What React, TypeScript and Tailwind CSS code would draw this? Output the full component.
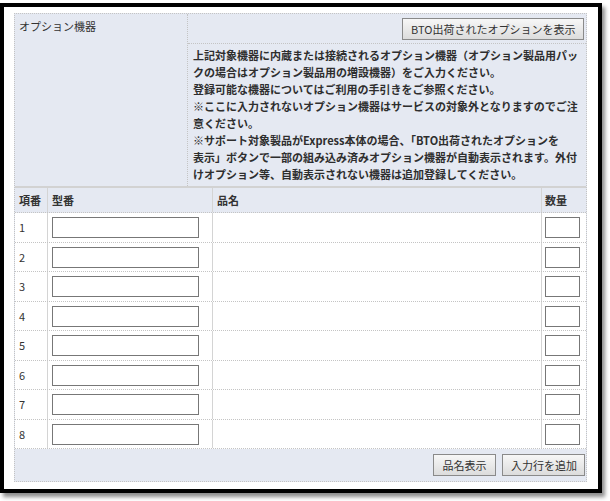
const rows = [1, 2, 3, 4, 5, 6, 7, 8];

const font = { fontFamily: '"Noto Sans CJK JP", "Noto Sans", sans-serif' };

function GrayButton({ children, className = "" }: { children: React.ReactNode; className?: string }) {
  return (
    <button
      className={`h-[22px] px-2 border border-[#8a8a8a] bg-gradient-to-b from-[#f7f7f7] to-[#dcdcdc] text-[11px] leading-none text-[#333] whitespace-nowrap ${className}`}
    >
      {children}
    </button>
  );
}

export default function App() {
  return (
    <div className="w-[610px] h-[501px] bg-white text-[#333]" style={font}>
      <div className="pt-[3px]">
        {/* Black frame */}
        <div className="w-[602px] h-[490px] border-4 border-black bg-white pl-[10px] pr-[11px] pt-[6px] pb-[7px] shadow-[3px_4px_4px_rgba(0,0,0,0.45)]">
          <div className="w-[573px] h-[469px] bg-[#e5e9f2] border border-dotted border-[#c4c4c4] flex flex-col">
            {/* Header */}
            <div className="flex h-[174px] border-b-2 border-[#d2d2d2]">
              <div className="w-[172px] px-[4px] pt-[4px] text-[11px] leading-[17px]">オプション機器</div>
              <div className="flex-1 border-l border-dotted border-[#c4c4c4] flex flex-col">
                <div className="h-[30px] flex items-center justify-end pr-[2px] pt-[1px] border-b border-dotted border-[#c4c4c4]">
                  <GrayButton className="w-[182px]">BTO出荷されたオプションを表示</GrayButton>
                </div>
                <div className="pl-[5px] pt-[3px] text-[11px] leading-[17px] font-bold text-[#2e2e2e] whitespace-nowrap">
                  上記対象機器に内蔵または接続されるオプション機器（オプション製品用パッ
                  <br />
                  クの場合はオプション製品用の増設機器）をご入力ください。
                  <br />
                  登録可能な機器についてはご利用の手引きをご参照ください。
                  <br />
                  ※ここに入力されないオプション機器はサービスの対象外となりますのでご注
                  <br />
                  意ください。
                  <br />
                  ※サポート対象製品がExpress本体の場合、「BTO出荷されたオプションを
                  <br />
                  表示」ボタンで一部の組み込み済みオプション機器が自動表示されます。外付
                  <br />
                  けオプション等、自動表示されない機器は追加登録してください。
                </div>
              </div>
            </div>

            {/* Column headings */}
            <div className="flex h-[25px] text-[11px] font-bold border-b border-dotted border-[#c4c4c4]">
              <div className="w-[33px] pl-[4px] flex items-center border-r border-[#d4d4d4]">項番</div>
              <div className="w-[165px] pl-[4px] flex items-center border-r border-[#d4d4d4]">型番</div>
              <div className="w-[329px] pl-[4px] flex items-center border-r border-[#d4d4d4]">品名</div>
              <div className="flex-1 pl-[3px] flex items-center">数量</div>
            </div>

            {/* Rows */}
            {rows.map((n) => (
              <div
                key={n}
                className={`flex bg-white border-b border-dotted border-[#c4c4c4] text-[11px] ${n % 2 ? "h-[30px]" : "h-[29px]"}`}
              >
                <div className="w-[33px] pl-[4px] flex items-center border-r border-[#d4d4d4]">{n}</div>
                <div className="w-[165px] pl-[4px] flex items-center border-r border-[#d4d4d4]">
                  <input className="w-[147px] h-[21px] border border-[#777] bg-white outline-none" />
                </div>
                <div className="w-[329px] border-r border-[#d4d4d4]" />
                <div className="flex-1 pl-[3px] flex items-center">
                  <input className="w-[35px] h-[21px] border border-[#777] bg-white outline-none" />
                </div>
              </div>
            ))}

            {/* Footer */}
            <div className="flex-1 flex items-center justify-end gap-[6px] pr-[1px]">
              <GrayButton className="w-[63px]">品名表示</GrayButton>
              <GrayButton className="w-[83px]">入力行を追加</GrayButton>
            </div>
          </div>
        </div>
      </div>
    </div>
  );
}
